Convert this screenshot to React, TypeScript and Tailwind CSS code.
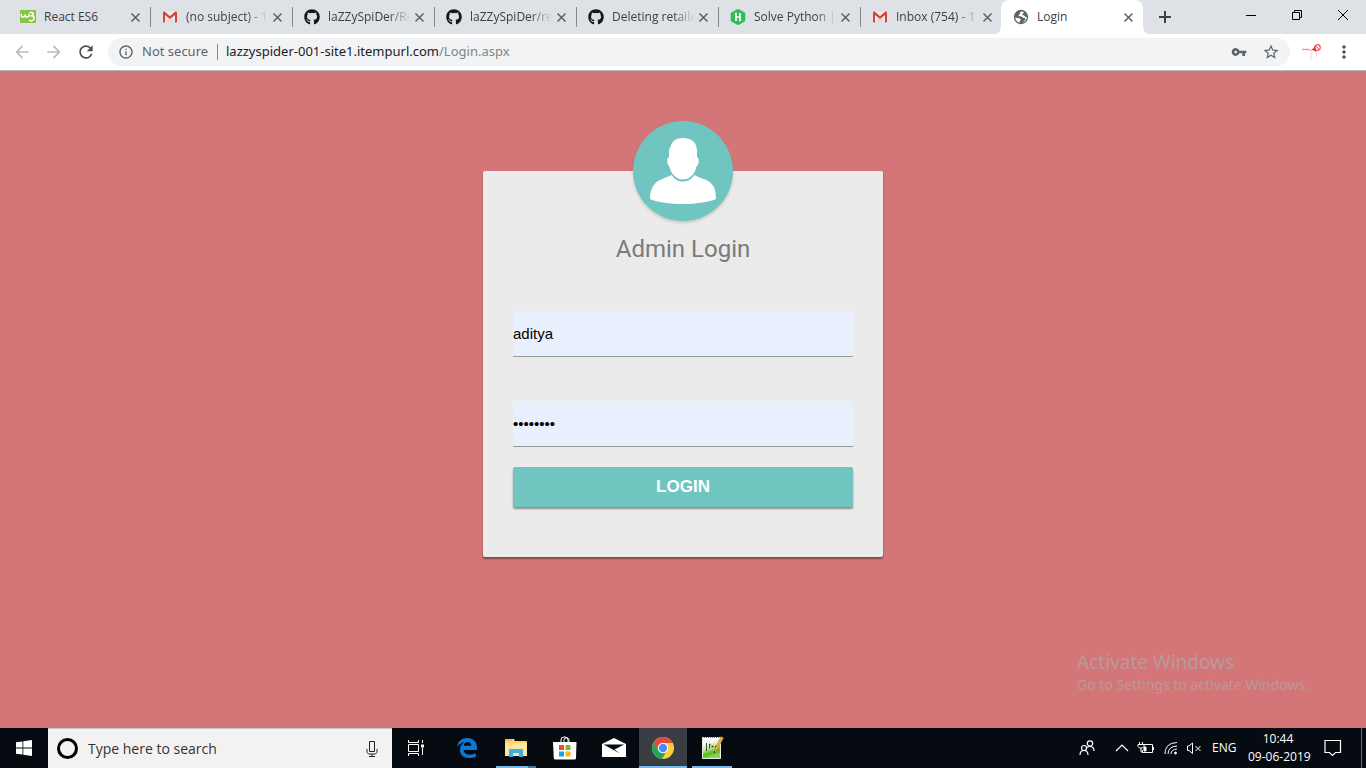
import type { ReactNode } from "react";
import { FaGithub } from "react-icons/fa";
import {
  MdArrowBack,
  MdArrowForward,
  MdInfoOutline,
  MdMoreVert,
  MdRefresh,
  MdStarBorder,
  MdVpnKey,
} from "react-icons/md";

function W3Icon() {
  return (
    <svg viewBox="0 0 16 16" className="size-4" aria-hidden="true">
      <rect y="1" width="16" height="13" rx="1" fill="#8ac541" />
      <path d="M1.2 5.2q.2 3 2 2.9T5 5.6q.2 2.5 2 2.5t1.900-2.300" fill="none" stroke="#fff" strokeWidth="1.500" strokeLinecap="round" />
      <path d="M10 4q1.500-1.400 3 0t-1.600 2.800q2.900.3 2.700 2.500T11.600 12q-1.300.2-2-.8" fill="none" stroke="#fff" strokeWidth="1.500" strokeLinecap="round" />
    </svg>
  );
}

function GmailIcon() {
  return (
    <svg viewBox="0 0 16 16" className="size-4" aria-hidden="true">
      <rect x="1" y="2.500" width="14" height="11" rx="1" fill="#ece9e8" />
      <path d="M3 13.500 8 8.500l5 5z" fill="#dedbda" />
      <path d="M1 3.500q0-1 1-1h.6L8 7.200l5.400-4.700h.6q1 0 1 1v9q0 1-1 1h-1V5.900L8 10 3 5.900v7.600H2q-1 0-1-1z" fill="#d54537" />
    </svg>
  );
}

function HackerRankIcon() {
  return (
    <svg viewBox="0 0 16 16" className="size-4" aria-hidden="true">
      <path d="M8 0 15 4v8l-7 4-7-4V4z" fill="#2ebd59" stroke="#2ebd59" strokeLinejoin="round" strokeWidth=".5" />
      <path d="M6 4v8M10 4v8M6 8h4M4.900 4.600h1.800M9.300 11.400h1.800" stroke="#fff" strokeWidth="1.700" fill="none" />
    </svg>
  );
}

function GlobeIcon() {
  return (
    <svg viewBox="0 0 16 16" className="size-4" aria-hidden="true">
      <circle cx="8" cy="8" r="7.200" fill="#5f6368" />
      <path d="M8.500 2.200 7 3.500v1.300L5.700 6v1.200H8l2 1.500h1.800l.7 1.300-1.500 2.300-1.500 1.200c2.500-.7 4.300-2.700 4.400-5.300L12 7.500 11 6.500 9.500 6V4.500l1.800-.8c-.8-.8-1.800-1.300-2.800-1.500z" fill="#fff" />
      <path d="M2.200 8.500c.2 2.500 2 4.600 4.500 5.200v-1.500l1.300-1.500L6.800 9.500 4.500 9z" fill="#fff" />
    </svg>
  );
}

type Tab = { title: string; icon: ReactNode; active?: boolean };

const github = <FaGithub className="size-4 text-[#191717]" />;

const tabs: Tab[] = [
  { title: "React ES6", icon: <W3Icon /> },
  { title: "(no subject) - 1", icon: <GmailIcon /> },
  { title: "laZZySpiDer/Re", icon: github },
  { title: "laZZySpiDer/re", icon: github },
  { title: "Deleting retaile", icon: github },
  { title: "Solve Python |", icon: <HackerRankIcon /> },
  { title: "Inbox (754) - 1", icon: <GmailIcon /> },
  { title: "Login", icon: <GlobeIcon />, active: true },
];

function TabItem({ title, icon, active }: Tab) {
  const fades = title.length > 12;
  return (
    <div
      role="tab"
      aria-selected={!!active}
      className={
        active
          ? "relative flex h-full w-[142px] items-center rounded-t-lg bg-white pl-3"
          : "flex h-full w-[142px] items-center pl-[11px]"
      }
    >
      <span className="shrink-0">{icon}</span>
      <span
        className={`ml-2 w-[82px] shrink-0 text-[12px] whitespace-nowrap text-[#3c4043] ${
          fades ? "[mask-image:linear-gradient(to_right,black_75%,transparent)]" : ""
        }`}
      >
        {title}
      </span>
      <button aria-label={`Close ${title}`} className="ml-[3px] text-[#5f6368]">
        <svg viewBox="0 0 13 13" className="size-[13px]" stroke="currentColor" strokeWidth="1.600">
          <path d="m2.500 2.500 8 8M10.500 2.500l-8 8" />
        </svg>
      </button>
      {!active && <span className="ml-auto h-5 w-px bg-[#85898e]" />}
      {active && (
        <>
          <svg viewBox="0 0 8 8" className="absolute bottom-0 -left-2 size-2" aria-hidden="true">
            <path d="M8 0v8H0q8 0 8-8" fill="#fff" />
          </svg>
          <svg viewBox="0 0 8 8" className="absolute -right-2 bottom-0 size-2" aria-hidden="true">
            <path d="M0 0v8h8Q0 8 0 0" fill="#fff" />
          </svg>
        </>
      )}
    </div>
  );
}

function TabStrip() {
  return (
    <div className="flex h-[34px] bg-[#dee1e6] pl-[9px]">
      <div role="tablist" className="flex">
        {tabs.map((tab, i) => (
          <div key={i} className={tab.active ? "-ml-[2px]" : ""}>
            <TabItem {...tab} />
          </div>
        ))}
      </div>
      <button aria-label="New tab" className="ml-4 text-[#3c4043]">
        <svg viewBox="0 0 12 12" className="size-3" stroke="currentColor" strokeWidth="2">
          <path d="M6 0v12M0 6h12" />
        </svg>
      </button>
      <div className="ml-auto flex h-[29px] items-center text-black">
        <button aria-label="Minimize" className="flex w-[46px] justify-center">
          <svg viewBox="0 0 10 10" className="size-[10px]" stroke="currentColor">
            <path d="M0 5.500h10" />
          </svg>
        </button>
        <button aria-label="Restore" className="flex w-[46px] justify-center">
          <svg viewBox="0 0 10 10" className="size-[10px]" stroke="currentColor" fill="none">
            <path d="M.5 2.500h7v7h-7zM2.500 2V.5h7v7H8" />
          </svg>
        </button>
        <button aria-label="Close window" className="flex w-[46px] justify-center">
          <svg viewBox="0 0 10 10" className="size-[10px]" stroke="currentColor">
            <path d="m0 0 10 10M10 0 0 10" />
          </svg>
        </button>
      </div>
    </div>
  );
}

function Toolbar() {
  return (
    <div className="flex h-[37px] items-center border-b border-[#b3b5b8] bg-white pr-3 pl-3 text-[#5f6368]">
      <button aria-label="Back" className="text-[#babcbe]">
        <MdArrowBack className="size-5" />
      </button>
      <button aria-label="Forward" className="ml-3 text-[#babcbe]">
        <MdArrowForward className="size-5" />
      </button>
      <button aria-label="Reload" className="ml-3 text-[#4a4d51]">
        <MdRefresh className="size-5" />
      </button>
      <div className="ml-3 flex h-7 flex-1 items-center rounded-full bg-[#f1f3f4] px-[10px] font-['Noto_Sans',sans-serif] text-[13px]">
        <MdInfoOutline className="size-4" />
        <span className="ml-2 w-[67px] whitespace-nowrap">Not secure</span>
        <span className="mx-2 h-4 w-px bg-[#85898e]" />
        <span className="flex-1 text-[#202124]">
          lazzyspider-001-site1.itempurl.com<span className="text-[#80868b]">/Login.aspx</span>
        </span>
        <button aria-label="Saved passwords">
          <MdVpnKey className="size-4" />
        </button>
        <button aria-label="Bookmark this page" className="ml-[15px]">
          <MdStarBorder className="size-[18px]" />
        </button>
      </div>
      <button aria-label="Extension" className="ml-3">
        <svg viewBox="0 0 20 18" className="size-5" fill="none">
          <path d="M0 6.500h8" stroke="#f19a97" strokeWidth="1.500" />
          <path d="m8 8 6-5v6l-3-2z" fill="#ea2f2f" />
          <circle cx="15.500" cy="4.500" r="2.800" stroke="#ec5552" strokeWidth="1.200" />
          <path d="m13.500 2.500 4 4" stroke="#ec5552" />
          <path d="M9 9v8M14.500 9v5" stroke="#f8d0ce" />
        </svg>
      </button>
      <button aria-label="Chrome menu" className="ml-3 text-[#4a4d51]">
        <MdMoreVert className="size-5" />
      </button>
    </div>
  );
}

function Avatar() {
  return (
    <div className="-mt-[50px] size-[100px] rounded-full bg-[#70c5c0] shadow-[0_2px_3px_rgba(0,0,0,0.15)]">
      <svg viewBox="0 0 100 100" className="size-full" fill="#fff" role="img" aria-label="User">
        <path d="M50 17c9 0 14 5 14 13v6c2 1 2 4 1.500 6-.5 2-1 3-2 3.500C62 53 57 58.500 50 58.500S38 53 36.500 45.500c-1-.5-1.500-1.500-2-3.500-.5-2-.5-5 1.500-6v-6c0-1.500.5-3 1.500-4C39 20 43 17 50 17z" />
        <path d="M38.500 54C42 58.500 45 60.500 50 60.500s8-2 11.500-6.500c3 2 7 3 10.500 4.500 8 3 11 9 11 19.500C75 81.500 62 83 50 83s-26-1.500-33-5c0-10.500 4-16.500 11-19.500 4-2 7-2.500 10.500-4.500z" />
      </svg>
    </div>
  );
}

function LoginCard() {
  return (
    <form
      onSubmit={(e) => e.preventDefault()}
      className="flex w-[400px] flex-col items-center rounded-[2px] bg-[#ebebeb] px-[30px] pb-[50px] shadow-[0_2px_2px_rgba(0,0,0,0.4)]"
    >
      <Avatar />
      <h1 className="mt-3 font-[Roboto,sans-serif] text-[24px] leading-8 text-[#7a7a7a]">Admin Login</h1>
      <input
        type="text"
        aria-label="Username"
        defaultValue="aditya"
        className="mt-[46px] h-[46px] w-full border-b border-[#999] bg-[#e8f0fe] font-['Liberation_Sans',sans-serif] text-[15px] text-black outline-none"
      />
      <input
        type="password"
        aria-label="Password"
        defaultValue="password"
        className="mt-11 h-[46px] w-full border-b border-[#999] bg-[#e8f0fe] font-['Liberation_Sans',sans-serif] text-[15px] text-black outline-none"
      />
      <button
        type="submit"
        className="mt-5 h-10 w-full rounded-[2px] bg-[#70c5c0] font-['Liberation_Sans',sans-serif] text-[17px] font-bold text-white shadow-[0_2px_2px_rgba(0,0,0,0.4)]"
      >
        LOGIN
      </button>
    </form>
  );
}

function AppButton({ label, className, children }: { label: string; className?: string; children: ReactNode }) {
  return (
    <button aria-label={label} className={`relative flex h-10 w-12 items-center justify-center ${className ?? ""}`}>
      {children}
    </button>
  );
}

function Taskbar() {
  return (
    <footer className="flex h-10 items-center bg-[#060b12] text-white">
      <AppButton label="Start">
        <svg viewBox="0 0 16 16" className="size-4" fill="#fff">
          <path d="M0 2.300 6.500 1.400v6.200H0zM7.300 1.300 16 0v7.600H7.300zM0 8.400h6.500v6.200L0 13.700zM7.300 8.400H16V16l-8.700-1.300z" />
        </svg>
      </AppButton>
      <label className="flex h-10 w-[344px] items-center border-t border-[#c4c4c4] bg-[#f2f2f2] pr-3 pl-[9px]">
        <span className="size-[21px] rounded-full border-[3px] border-black" />
        <input
          type="text"
          aria-label="Search"
          placeholder="Type here to search"
          className="ml-[10px] min-w-0 flex-1 bg-transparent text-[14px] outline-none placeholder:text-[#333]"
        />
        <svg viewBox="0 0 16 20" className="h-5 w-4" fill="none" stroke="#222">
          <path d="M5.500 2.500h5v10h-5zM3 10v3.500l1.500 1.500h7l1.500-1.500V10M8 15v2.500M5 17.500h6" />
        </svg>
      </label>
      <AppButton label="Task view">
        <svg viewBox="0 0 16 16" className="size-4" fill="none" stroke="#fff">
          <path d="M.5 0v2.500h10V0M.5 4.500h10v7H.5zM.5 16v-2.500h10V16M14.500 0v3M14.500 8v7" />
          <path d="M13 4.500h3v3h-3z" fill="#fff" stroke="none" />
        </svg>
      </AppButton>
      <div className="ml-[3px] flex gap-px">
        <AppButton label="Edge">
          <svg viewBox="0 0 20 20" className="size-5" fill="#0a7ad8">
            <path d="M0 9C1 3 5 0 10.300 0 16.500 0 20 4.500 20 9.800V12H6.500c.2 3 3 4.700 6.200 4.700 2.300 0 4.300-.5 6-1.600v3.800C16.700 19.700 14.500 20 12 20 6.500 20 3 16.800 3 12c0-3.200 1.500-6 4.400-7.700C4.500 4.500 1.800 6.300 0 9zm6.700-1.200h7.600C14.300 5.300 13 4 10.900 4 8.500 4 7 5.700 6.700 7.800z" />
          </svg>
        </AppButton>
        <AppButton label="File Explorer">
          <svg viewBox="0 0 22 18" className="h-[18px] w-[22px]">
            <path d="M0 1q0-1 1-1h8l1 2h11q1 0 1 1v14H0z" fill="#ffd36b" />
            <path d="M0 4h22v13H0z" fill="#ffe49a" />
            <path d="M1 1h6" stroke="#e9a33a" />
            <path d="M4 18V11q0-1 1-1h12q1 0 1 1v7h-4v-4H8v4z" fill="#35b1e8" />
          </svg>
          <span className="absolute bottom-0 left-1 flex h-[2px] w-10">
            <span className="w-8 bg-[#76b9ed]" />
            <span className="flex-1 bg-[#4b7699]" />
          </span>
        </AppButton>
        <AppButton label="Microsoft Store">
          <svg viewBox="0 0 24 24" className="size-6">
            <path d="M8 7V4q0-3 3-3h1q3 0 3 3v3M11 7V4q0-2 2-2h1q2 0 2 2v3" fill="none" stroke="#fff" />
            <path d="M0 6h23.500l-.5 16q0 1.500-1.500 1.500H2.300Q1 23.500.8 22z" fill="#fff" />
            <path d="M6 9h5v5H6z" fill="#e8502d" />
            <path d="M12.500 9h5v5h-5z" fill="#80b91c" />
            <path d="M6 15.500h5v5H6z" fill="#17a4ec" />
            <path d="M12.500 15.500h5v5h-5z" fill="#fcb813" />
          </svg>
        </AppButton>
        <AppButton label="Mail">
          <svg viewBox="0 0 24 20" className="h-5 w-6">
            <path d="M0 6 12 0l12 6v13H0z" fill="#fff" />
            <path d="M1.500 6.500h20.700L12.500 11.500l5.500 4z" fill="#060b12" />
          </svg>
        </AppButton>
        <AppButton label="Chrome" className="bg-[#3a3d43]">
          <svg viewBox="0 0 24 24" className="size-6">
            <circle cx="12" cy="12" r="11" fill="#fbcf3b" />
            <path d="M2.500 6.500A11 11 0 0 1 21.500 6.500L22 7H12l-4.500 7.500z" fill="#e0493b" />
            <path d="M2.500 6.500A11 11 0 0 0 11 23l5-8.500-8.300 0z" fill="#25a261" />
            <circle cx="12" cy="12" r="5.200" fill="#fff" />
            <circle cx="12" cy="12" r="4.200" fill="#4c8bf5" />
          </svg>
          <span className="absolute inset-x-0 bottom-0 h-[2px] bg-[#76b9ed]" />
        </AppButton>
        <AppButton label="Notepad++">
          <svg viewBox="0 0 24 24" className="size-6">
            <defs>
              <linearGradient id="page" x1="0" y1="0" x2=".3" y2="1">
                <stop offset=".3" stopColor="#fbfdf8" />
                <stop offset=".6" stopColor="#b5e58a" />
                <stop offset=".8" stopColor="#4fbf1c" />
                <stop offset="1" stopColor="#8ed45c" />
              </linearGradient>
            </defs>
            <path d="M2.500 1.500h18v21h-18z" fill="url(#page)" stroke="#e6ecdf" />
            <path d="M4 1.500h15" stroke="#777" strokeDasharray="1 1" />
            <path d="M6.500 7v8M9.500 8v4.500" stroke="#444" />
            <path d="M9 8.500h1.500M11.500 10.500h2M15 10.500h2" stroke="#333" strokeWidth="1.500" />
            <path d="m21 .5-6.500 13.500-.5 3 2.300-2L23.500 2z" fill="#f2ae45" stroke="#b8701f" strokeWidth=".5" />
            <path d="m14.200 15-.4 2.500 1.700-1.500z" fill="#222" />
          </svg>
          <span className="absolute inset-x-1 bottom-0 h-[2px] bg-[#76b9ed]" />
        </AppButton>
      </div>
      <div className="ml-auto flex h-10 items-center text-[12px]">
        <button aria-label="People">
          <svg viewBox="0 0 16 16" className="size-4" fill="none" stroke="#fff" strokeWidth="1.200">
            <circle cx="5" cy="8" r="2.500" />
            <circle cx="11" cy="3.500" r="2.700" />
            <path d="M1 15q0-4.500 4-4.500t4 4.500M8 7.500q1-1 3-1 4 0 4 4.500" />
          </svg>
        </button>
        <button aria-label="Show hidden icons" className="ml-5">
          <svg viewBox="0 0 14 14" className="size-[14px]" fill="none" stroke="#fff" strokeWidth="1.200">
            <path d="m1 10 6-6 6 6" />
          </svg>
        </button>
        <svg viewBox="0 0 18 14" className="ml-2 h-[14px] w-[18px]" fill="none" stroke="#fff" role="img" aria-label="Battery charging">
          <path d="M7 3.500h8.500v8H5.500V9M16.500 6v3M2.500 1v2M5.500 1v2M1 3.500h6v2L5.500 7h-3L1 5.500zM4 7v4h2" />
          <path d="M7 6h2v4H7z" fill="#fff" />
        </svg>
        <svg viewBox="0 0 14 14" className="ml-[9px] size-[14px]" fill="none" stroke="#fff" role="img" aria-label="Wi-Fi">
          <path d="M1 13Q1 2 13 1.500M4 13q0-7.500 9-8M7 13q0-4.500 6-5" />
          <path d="M1 12Q1 5 8 2" stroke="#aaa" />
          <circle cx="11.500" cy="12" r="1" fill="#fff" />
        </svg>
        <svg viewBox="0 0 16 14" className="ml-2 h-[14px] w-4" fill="none" stroke="#fff" role="img" aria-label="Muted">
          <path d="M1.500 5v4.500H3L6.500 12.500V2L3 5zM9.500 5l5 5M14.500 5l-5 5" />
        </svg>
        <span className="ml-[10px] w-[24px]">ENG</span>
        <div className="ml-3 w-[60px] text-center leading-[18px] whitespace-nowrap">
          <div>10:44</div>
          <div>09-06-2019</div>
        </div>
        <button aria-label="Notifications" className="ml-4">
          <svg viewBox="0 0 18 18" className="size-[18px]" fill="none" stroke="#fff" strokeWidth="1.200">
            <path d="M1 1.500h15.500v12h-5L8.500 16.500l-3-3H1z" />
          </svg>
        </button>
        <span className="mr-1 ml-[19px] h-10 w-px bg-[#6b6f75]" />
      </div>
    </footer>
  );
}

export default function App() {
  return (
    <div className="flex min-h-screen flex-col font-['Open_Sans','Noto_Sans',sans-serif]">
      <header>
        <TabStrip />
        <Toolbar />
      </header>
      <main className="relative flex flex-1 flex-col items-center bg-[#d47677] pt-[100px]">
        <LoginCard />
        <div className="absolute right-[57px] bottom-8 font-['Noto_Sans',sans-serif] text-[#b79a99]">
          <p className="text-[19px] leading-6">Activate Windows</p>
          <p className="text-[14px] leading-[22px]">Go to Settings to activate Windows.</p>
        </div>
      </main>
      <Taskbar />
    </div>
  );
}
